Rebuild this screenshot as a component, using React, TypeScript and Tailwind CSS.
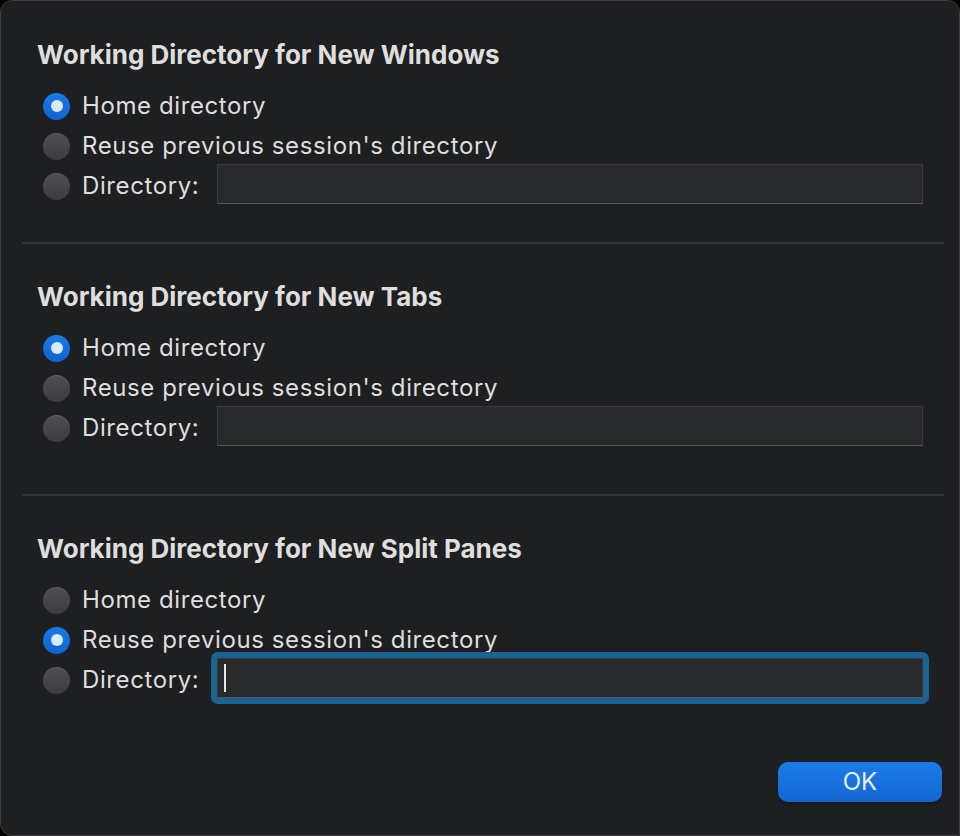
import { useState } from 'react';

type Choice = 'home' | 'reuse' | 'dir';

const font = { fontFamily: 'Inter, "Noto Sans", sans-serif' };

function Radio({ checked }: { checked: boolean }) {
  if (checked) {
    return (
      <span className="flex h-[27px] w-[27px] shrink-0 items-center justify-center rounded-full bg-gradient-to-b from-[#1a7ae8] to-[#0f63cf]">
        <span className="h-[12px] w-[12px] rounded-full bg-[#dce9fb]" />
      </span>
    );
  }
  return (
    <span className="h-[27px] w-[27px] shrink-0 rounded-full bg-gradient-to-b from-[#505052] to-[#3c3c3e] shadow-[inset_0_1px_0_rgba(255,255,255,0.08)]" />
  );
}

function Section({
  title,
  initial,
  focused,
  extraGap,
}: {
  title: string;
  initial: Choice;
  focused?: boolean;
  extraGap?: boolean;
}) {
  const [choice, setChoice] = useState<Choice>(initial);

  return (
    <section className={extraGap ? 'pb-[46px]' : 'pb-[36px]'}>
      <h2 className="pl-[36px] text-[26px] font-bold leading-[30px] text-[#dedede]">{title}</h2>
      <div className="mt-[16px] flex flex-col text-[24px] tracking-[0.6px] text-[#dedede]">
        <button onClick={() => setChoice('home')} className="flex h-[40px] items-center gap-[12px] pl-[42px] text-left">
          <Radio checked={choice === 'home'} />
          <span>Home directory</span>
        </button>
        <button onClick={() => setChoice('reuse')} className="flex h-[40px] items-center gap-[12px] pl-[42px] text-left">
          <Radio checked={choice === 'reuse'} />
          <span>Reuse previous session's directory</span>
        </button>
        <div className="flex h-[40px] items-center pl-[42px] pr-[36px]">
          <button onClick={() => setChoice('dir')} className="flex w-[174px] shrink-0 items-center gap-[12px]">
            <Radio checked={choice === 'dir'} />
            <span>Directory:</span>
          </button>
          {focused ? (
            <div className="-mb-[4px] -mt-[8px] -ml-[6px] -mr-[6px] flex-1 rounded-[7px] bg-[#1b6394] p-[6px]">
              <div className="flex h-[40px] items-center border border-[#3a3a3c] border-b-[#55575a] bg-[#28292b] pl-[6px]">
                <span className="h-[28px] w-[2px] bg-[#e8e8e8]" />
              </div>
            </div>
          ) : (
            <input className="-mt-[4px] h-[40px] flex-1 border border-[#3a3a3c] border-b-[#55575a] bg-[#28292b] text-[#dedede] outline-none" />
          )}
        </div>
      </div>
    </section>
  );
}

export default function App() {
  return (
    <div className="h-[836px] w-[960px] bg-black" style={font}>
      <div className="flex h-full flex-col rounded-tl-[12px] rounded-tr-[12px] rounded-bl-[12px] border border-[#3b3b3d] bg-[#1e1f21] pt-[39px]">
        <Section title="Working Directory for New Windows" initial="home" />
        <div className="mb-[38px] ml-[21px] mr-[15px] h-[2px] bg-[#333436]" />
        <Section title="Working Directory for New Tabs" initial="home" extraGap />
        <div className="mb-[38px] ml-[21px] mr-[15px] h-[2px] bg-[#333436]" />
        <Section title="Working Directory for New Split Panes" initial="reuse" focused />
        <div className="mt-auto flex justify-end pb-[33px] pr-[17px]">
          <button className="h-[40px] w-[164px] rounded-[10px] bg-gradient-to-b from-[#1b7be8] to-[#1466d2] text-[24px] text-[#e6eefa] shadow-[0_1px_2px_rgba(0,0,0,0.4)]">
            OK
          </button>
        </div>
      </div>
    </div>
  );
}
